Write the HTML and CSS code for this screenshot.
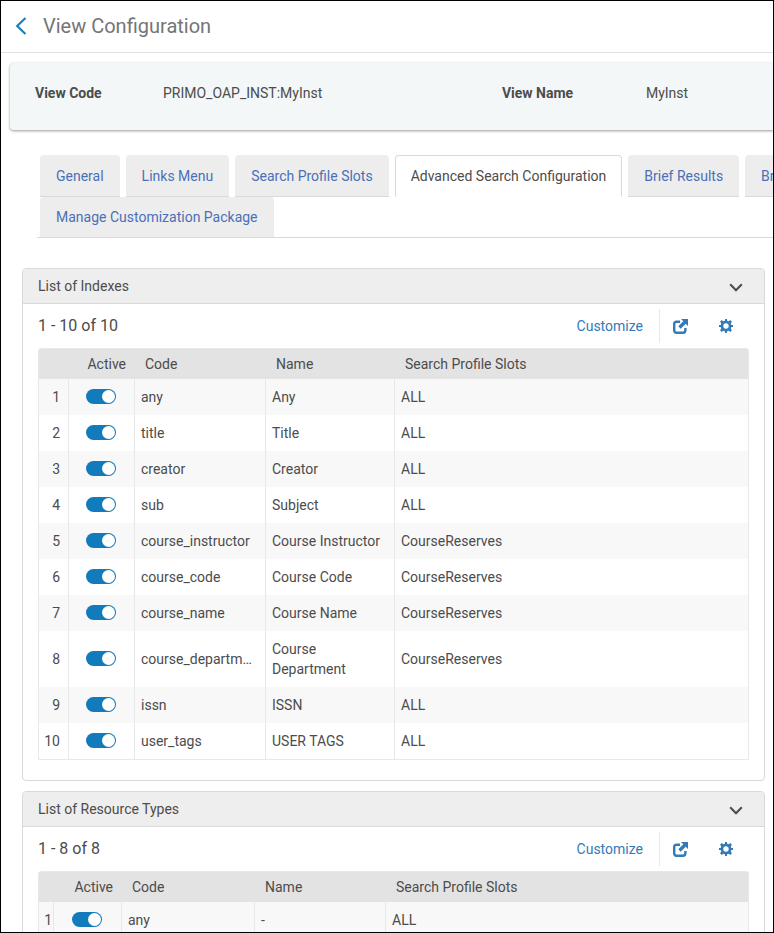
FILE: index.html
```html
<!DOCTYPE html>
<html lang="en">
<head>
<meta charset="utf-8">
<title>View Configuration</title>
<link rel="stylesheet" href="styles.css">
</head>
<body>
<svg class="sprite" aria-hidden="true">
  <symbol id="chevron" viewBox="0 0 14 9"><path d="M1.2 1.2 7 7.300l5.800-6.100" fill="none" stroke="currentColor" stroke-width="2"/></symbol>
  <symbol id="export" viewBox="0 0 15 15"><path d="M7 2.700H3.600Q1.200 2.700 1.200 5v6.300q0 2.400 2.400 2.400H10q2.400 0 2.400-2.400V9" fill="none" stroke="currentColor" stroke-width="2.400"/><path d="M8 0h7v7l-2.300-2.300-5 5-2.400-2.400 5-5z" fill="currentColor"/></symbol>
  <symbol id="gear" viewBox="0 0 14 14"><path fill="currentColor" fill-rule="evenodd" d="M5.900 1.700 6.100 0h1.800l.2 1.700 1.700.5L11.200 1 13 2.800l-1.200 1.400.5 1.700 1.700.2v1.800l-1.700.2-.5 1.700 1.200 1.400-1.800 1.800-1.400-1.200-1.700.5-.2 1.700H6.100l-.2-1.700-1.700-.5L2.800 13 1 11.200l1.200-1.400-.5-1.700L0 7.900V6.100l1.700-.2.500-1.700L1 2.800 2.800 1l1.400 1.200zM7 4.300a2.700 2.700 0 1 0 0 5.400 2.700 2.700 0 0 0 0-5.400z"/></symbol>
</svg>
<div class="app">
  <header class="page-header">
    <a class="back" href="#" aria-label="Back"><svg width="12" height="18" viewBox="0 0 12 18"><path d="M10.500 1 2.200 9l8.300 8" fill="none" stroke="currentColor" stroke-width="2.200"/></svg></a>
    <h1>View Configuration</h1>
  </header>

  <dl class="summary">
    <dt>View Code</dt><dd>PRIMO_OAP_INST:MyInst</dd>
    <dt>View Name</dt><dd>MyInst</dd>
  </dl>

  <nav class="tabs" aria-label="Configuration sections">
    <div class="tab-row">
      <a class="tab" href="#">General</a>
      <a class="tab" href="#">Links Menu</a>
      <a class="tab" href="#">Search Profile Slots</a>
      <a class="tab active" href="#" aria-current="page">Advanced Search Configuration</a>
      <a class="tab" href="#">Brief Results</a>
      <a class="tab" href="#">Br</a>
    </div>
    <div class="tab-row">
      <a class="tab" href="#">Manage Customization Package</a>
    </div>
  </nav>

  <main>
    <section class="panel">
      <div class="panel-head">
        <h2>List of Indexes</h2>
        <button class="icon-button" type="button" aria-label="Collapse"><svg width="14" height="9"><use href="#chevron"/></svg></button>
      </div>
      <div class="toolbar">
        <p class="count">1 - 10 of 10</p>
        <button class="customize" type="button">Customize</button>
        <span class="tools">
          <button class="icon-button" type="button" aria-label="Export"><svg width="15" height="15"><use href="#export"/></svg></button>
          <button class="icon-button" type="button" aria-label="Settings"><svg width="14" height="14"><use href="#gear"/></svg></button>
        </span>
      </div>
      <table class="indexes">
        <colgroup><col class="number"><col class="toggle"><col class="code"><col class="name"><col></colgroup>
        <thead><tr><td></td><th>Active</th><th>Code</th><th>Name</th><th>Search Profile Slots</th></tr></thead>
        <tbody>
          <tr><td>1</td><td><input type="checkbox" aria-label="any" checked></td><td>any</td><td>Any</td><td>ALL</td></tr>
          <tr><td>2</td><td><input type="checkbox" aria-label="title" checked></td><td>title</td><td>Title</td><td>ALL</td></tr>
          <tr><td>3</td><td><input type="checkbox" aria-label="creator" checked></td><td>creator</td><td>Creator</td><td>ALL</td></tr>
          <tr><td>4</td><td><input type="checkbox" aria-label="sub" checked></td><td>sub</td><td>Subject</td><td>ALL</td></tr>
          <tr><td>5</td><td><input type="checkbox" aria-label="course_instructor" checked></td><td>course_instructor</td><td>Course Instructor</td><td>CourseReserves</td></tr>
          <tr><td>6</td><td><input type="checkbox" aria-label="course_code" checked></td><td>course_code</td><td>Course Code</td><td>CourseReserves</td></tr>
          <tr><td>7</td><td><input type="checkbox" aria-label="course_name" checked></td><td>course_name</td><td>Course Name</td><td>CourseReserves</td></tr>
          <tr><td>8</td><td><input type="checkbox" aria-label="course_department" checked></td><td>course_departm…</td><td>Course Department</td><td>CourseReserves</td></tr>
          <tr><td>9</td><td><input type="checkbox" aria-label="issn" checked></td><td>issn</td><td>ISSN</td><td>ALL</td></tr>
          <tr><td>10</td><td><input type="checkbox" aria-label="user_tags" checked></td><td>user_tags</td><td>USER TAGS</td><td>ALL</td></tr>
        </tbody>
      </table>
    </section>

    <section class="panel">
      <div class="panel-head">
        <h2>List of Resource Types</h2>
        <button class="icon-button" type="button" aria-label="Collapse"><svg width="14" height="9"><use href="#chevron"/></svg></button>
      </div>
      <div class="toolbar">
        <p class="count">1 - 8 of 8</p>
        <button class="customize" type="button">Customize</button>
        <span class="tools">
          <button class="icon-button" type="button" aria-label="Export"><svg width="15" height="15"><use href="#export"/></svg></button>
          <button class="icon-button" type="button" aria-label="Settings"><svg width="14" height="14"><use href="#gear"/></svg></button>
        </span>
      </div>
      <table class="types">
        <colgroup><col class="number"><col class="toggle"><col class="code"><col class="name"><col></colgroup>
        <thead><tr><td></td><th>Active</th><th>Code</th><th>Name</th><th>Search Profile Slots</th></tr></thead>
        <tbody>
          <tr><td>1</td><td><input type="checkbox" aria-label="any" checked></td><td>any</td><td>-</td><td>ALL</td></tr>
        </tbody>
      </table>
    </section>
  </main>
</div>
</body>
</html>
```
FILE: styles.css
```css
* { box-sizing: border-box; }

body {
  margin: 0;
  background: #fff;
  color: #4c4c4c;
  font: 14px/20px Roboto, "Liberation Sans", sans-serif;
}

h1, h2, p, dl, dd { margin: 0; font-weight: 400; }
a { text-decoration: none; }
button {
  padding: 0;
  border: 0;
  background: none;
  color: inherit;
  font: inherit;
  cursor: pointer;
}
svg { display: block; }
.sprite { display: none; }

.app {
  height: 100vh;
  border: 1px solid #000;
  overflow: hidden;
}

.page-header {
  display: flex;
  align-items: center;
  gap: 16px;
  height: 52px;
  padding: 0 0 2px 14px;
  border-bottom: 1px solid #e0e0e0;
}
.page-header h1 { color: #757575; font-size: 20px; line-height: 24px; }
.back { color: #1b7fc0; }

.summary {
  display: grid;
  grid-template-columns: 128px 8fr 144px 3fr;
  margin: 10px 0 0 9px;
  padding: 20px 0 27px 25px;
  border-radius: 4px 0 0 4px;
  background: #f3f7f8;
  box-shadow: 0 1px 3px rgba(0, 0, 0, .4);
}
.summary dt { font-weight: 700; }

.tabs {
  margin: 25px 0 0 36px;
  padding-left: 3px;
  border-bottom: 1px solid #d9d9d9;
}
.tab-row { display: flex; gap: 6px; }
.tab {
  flex: none;
  padding: 11px 16px 10px;
  border-bottom: 1px solid #d9d9d9;
  border-radius: 4px 4px 0 0;
  background: #ededed;
  color: #4a70b8;
}
.tab-row:last-child .tab { padding: 10px 16px; border-bottom: 0; }
.tab.active {
  padding: 10px 15px;
  border: 1px solid #d9d9d9;
  border-bottom-color: #fff;
  background: #fff;
  color: #4c4c4c;
}

main {
  display: grid;
  gap: 10px;
  padding: 30px 8px 20px 21px;
}
.panel {
  padding-bottom: 20px;
  border: 1px solid #d9d9d9;
  border-radius: 4px;
}
.panel-head {
  display: flex;
  align-items: center;
  justify-content: space-between;
  height: 35px;
  padding: 0 21px 0 15px;
  border-bottom: 1px solid #d9d9d9;
  border-radius: 3px 3px 0 0;
  background: #eee;
}
.panel-head h2 { font-size: 14px; }
.panel-head svg { margin-top: 3px; }

.toolbar {
  display: flex;
  align-items: center;
  height: 44px;
  padding: 0 15px;
  color: #337ab7;
}
.count { margin-right: auto; color: #4c4c4c; font-size: 16px; }
.tools {
  display: flex;
  align-items: center;
  gap: 31px;
  height: 34px;
  margin-left: 16px;
  padding: 0 16px 0 13px;
  border-left: 1px solid #e8e8e8;
}

table {
  width: calc(100% - 30px);
  margin: 0 15px;
  border: 1px solid #e8e8e8;
  border-radius: 3px 3px 0 0;
  border-spacing: 0;
  table-layout: fixed;
}
.indexes .number { width: 30px; }
.indexes .toggle { width: 66px; }
.indexes .code { width: 131px; }
.indexes .name { width: 129px; }
.types .number { width: 15px; }
.types .toggle { width: 68px; }
.types .code { width: 133px; }
.types .name { width: 131px; }

thead td, th {
  height: 30px;
  padding: 0 0 0 10px;
  background: #e3e3e3;
  font-weight: 400;
  text-align: left;
}
th:nth-child(2) { padding: 0 9px 0 0; text-align: right; }
tbody td { padding: 8px 6px; border-right: 1px solid #e8e8e8; }
tbody td:last-child { border-right: 0; }
tbody td:first-child { padding: 8px 8px 8px 0; text-align: right; }
.types tbody td:first-child { padding-right: 1px; }
tbody td:nth-child(2) { padding: 0 2px 2px 0; }
tbody tr:nth-child(odd) { background: #f8f8f8; }

input[type="checkbox"] {
  display: block;
  width: 30px;
  height: 15px;
  margin: 0 auto;
  padding: 1px;
  border-radius: 8px;
  appearance: none;
  background: #117bbb;
}
input[type="checkbox"]::before {
  content: "";
  display: block;
  width: 13px;
  height: 13px;
  border-radius: 50%;
}
input[type="checkbox"]:checked::before { margin-left: auto; background: #fff; }
```
